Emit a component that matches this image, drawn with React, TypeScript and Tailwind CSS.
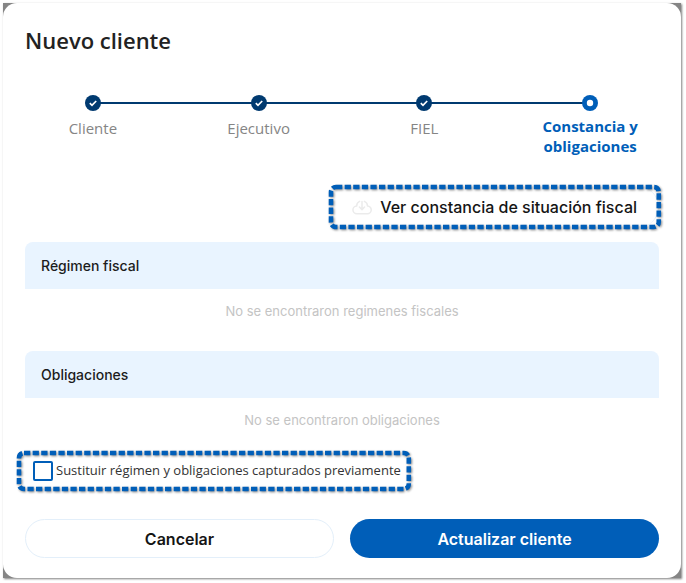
import React from 'react';
import clsx from 'clsx';

interface Step {
  label: string;
  done: boolean;
}

const steps: Step[] = [
  { label: 'Cliente', done: true },
  { label: 'Ejecutivo', done: true },
  { label: 'FIEL', done: true },
  { label: 'Constancia y obligaciones', done: false },
];

// Dashed marker drawn over the edge of whatever it wraps
const Callout: React.FC<{ className?: string; children: React.ReactNode }> = ({ className, children }) => (
  <div className={clsx('relative', className)}>
    {children}
    <svg
      className="pointer-events-none absolute inset-0 h-full w-full overflow-visible drop-shadow-[1px_1px_1px_rgba(0,0,0,0.45)]"
      fill="none"
      aria-hidden="true"
    >
      <rect width="100%" height="100%" rx="5" stroke="#005eb8" strokeWidth="4.6" strokeDasharray="6.3 2.3" />
    </svg>
  </div>
);

const Stepper: React.FC = () => (
  <ol className="mt-[41px] flex pr-2 pl-[7px]">
    {steps.map((step, index) => (
      <li key={step.label} className="relative flex flex-1 flex-col items-center">
        {index > 0 && <span className="absolute top-[7px] right-1/2 h-[2px] w-full bg-[#003a70]" />}
        {/* z-10 keeps the dot above the line of the next step */}
        <svg className="relative z-10 size-4" viewBox="0 0 16 16" fill="none" aria-hidden="true">
          <circle cx="8" cy="8" r="8" fill={step.done ? '#003a70' : '#005eb8'} />
          {step.done ? (
            <path d="M4.8 8.2 7 10.3 11.2 6" stroke="#fff" strokeWidth="1.7" />
          ) : (
            <circle cx="8" cy="8" r="3.2" fill="#fff" />
          )}
        </svg>
        <span
          className={clsx(
            'w-28 text-center text-[15px] leading-5',
            step.done ? 'mt-[7px] text-[#858585]' : 'mt-[5px] font-bold text-[#005eb8]'
          )}
        >
          {step.label}
        </span>
      </li>
    ))}
  </ol>
);

const EmptyTable: React.FC<{ title: string; message: string }> = ({ title, message }) => (
  <table className="w-full font-['Inter',sans-serif]">
    <thead>
      <tr>
        <th className="h-[47px] rounded-t-lg bg-[#e9f4ff] px-4 text-left text-sm font-medium text-[#1c1c1c]">{title}</th>
      </tr>
    </thead>
    <tbody>
      <tr>
        <td className="h-[46px] text-center text-[13px] text-[#c4c4c4]">{message}</td>
      </tr>
    </tbody>
  </table>
);

const App: React.FC = () => {
  return (
    <main className="bg-white p-[3px] pr-[5px] font-['Open_Sans',sans-serif]">
      <div className="bg-[#858585] shadow-[1px_1px_2px_0px_rgba(0,0,0,0.5)]">
        <div className="rounded-[14px] bg-white pt-[23px] pb-5">
          <h1 className="px-[22px] text-[22px] leading-7 font-semibold text-[#222]">Nuevo cliente</h1>

          <Stepper />

          <div className="px-[22px]">
            <div className="mt-[31px] flex justify-end">
              <Callout>
                <button
                  type="button"
                  className="flex h-10 items-center gap-2 rounded-r-full border-r border-[#e3effa] px-[21px] font-['Inter',sans-serif] text-base font-medium text-[#151515]"
                >
                  <svg className="size-5" viewBox="0 0 20 20" fill="none" stroke="#ebebeb" strokeWidth="1.5" strokeLinecap="round" strokeLinejoin="round" aria-hidden="true">
                    <path d="M7.6 4.4A5 5 0 0 0 4.7 9 3.9 3.9 0 0 0 5 16.8h10.2a3.9 3.9 0 0 0 .3-7.8 5 5 0 0 0-3.1-4.6" />
                    <path d="M10 4.5v7.8M7.4 10l2.6 2.6 2.6-2.6" />
                  </svg>
                  Ver constancia de situación fiscal
                </button>
              </Callout>
            </div>

            <div className="mt-[15px] flex flex-col gap-4">
              <EmptyTable title="Régimen fiscal" message="No se encontraron regimenes fiscales" />
              <EmptyTable title="Obligaciones" message="No se encontraron obligaciones" />
            </div>

            <Callout className="-ml-1.5 mt-[9px] w-fit">
              <label className="flex h-9 items-center gap-[3px] pr-2 pl-3.5 text-[13px] text-[#333]">
                <input type="checkbox" className="size-5 appearance-none rounded-xs border-2 border-[#005eb8] bg-white" />
                Sustituir régimen y obligaciones capturados previamente
              </label>
            </Callout>

            <div className="mt-[30px] grid grid-cols-2 gap-4 font-['Inter',sans-serif] text-base font-semibold">
              <button type="button" className="h-[39px] rounded-full border border-[#e3effa] text-[#151515]">
                Cancelar
              </button>
              <button type="button" className="h-[39px] rounded-full bg-[#005eb8] text-white">
                Actualizar cliente
              </button>
            </div>
          </div>
        </div>
      </div>
    </main>
  );
};

export default App;
